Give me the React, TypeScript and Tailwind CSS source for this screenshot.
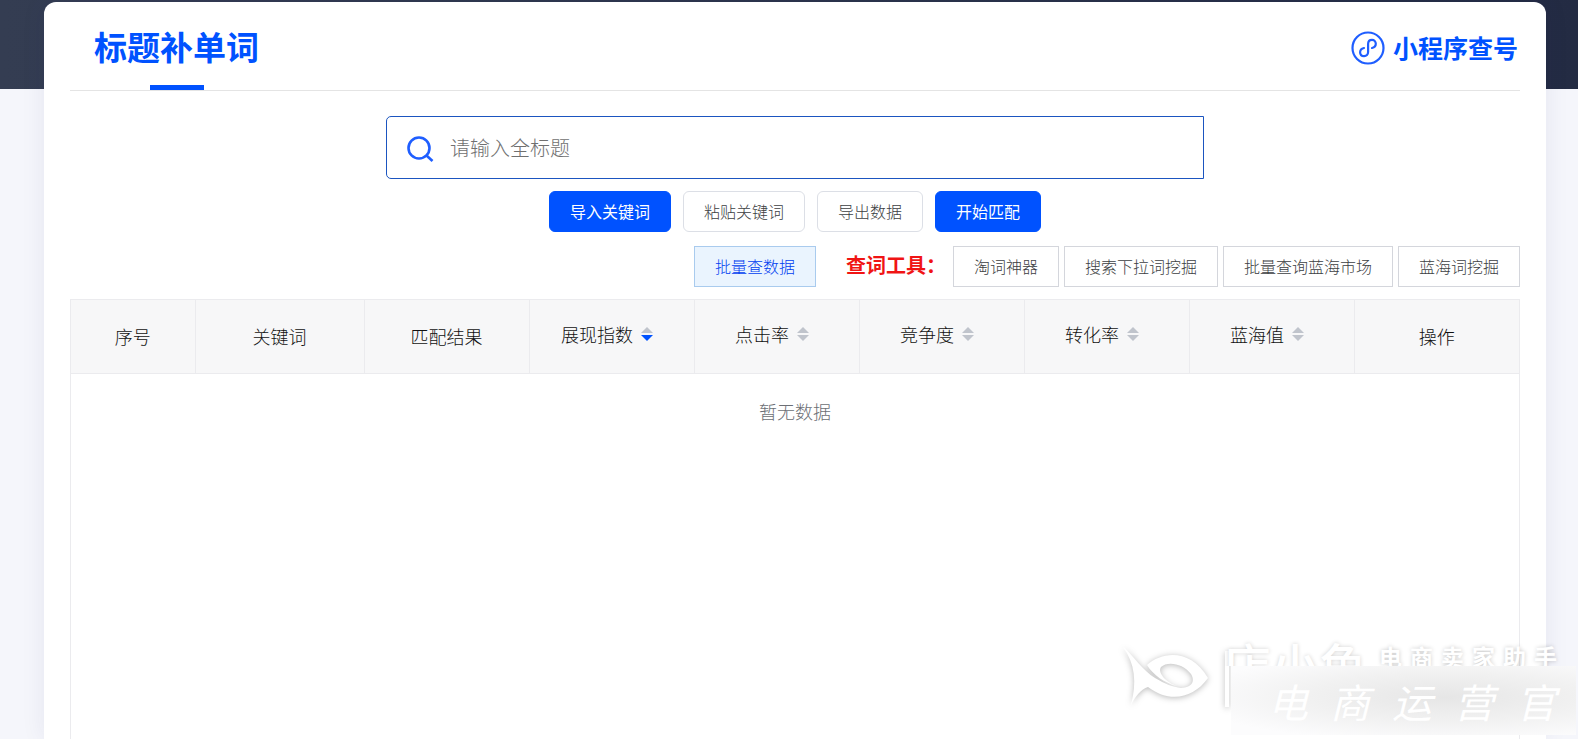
import type { ReactNode } from "react";

const columns = [
  { label: "序号" },
  { label: "关键词" },
  { label: "匹配结果" },
  { label: "展现指数", sort: "desc" },
  { label: "点击率", sort: "none" },
  { label: "竞争度", sort: "none" },
  { label: "转化率", sort: "none" },
  { label: "蓝海值", sort: "none" },
  { label: "操作" },
];

const tools = ["淘词神器", "搜索下拉词挖掘", "批量查询蓝海市场", "蓝海词挖掘"];

function ActionButton({ children, primary }: { children: ReactNode; primary?: boolean }) {
  return (
    <button
      type="button"
      className={`h-[41px] rounded-md border px-5 pb-[2px] text-base leading-5 ${
        primary
          ? "border-[#0052ff] bg-[#0052ff] text-white"
          : "border-[#dcdfe6] bg-white font-light text-[#3c3e42]"
      }`}
    >
      {children}
    </button>
  );
}

function SortIcon({ active }: { active: boolean }) {
  return (
    <svg width="14" height="16" viewBox="0 0 14 16" aria-hidden="true">
      <path d="M7 1 13 7H1Z" fill="#c0c4cc" />
      <path d="M1 9H13L7 15Z" fill={active ? "#0052ff" : "#c0c4cc"} />
    </svg>
  );
}

function MiniProgramIcon() {
  return (
    <svg width="34" height="34" viewBox="0 0 34 34" fill="none" stroke="#1f5eff" aria-hidden="true">
      <circle cx="17" cy="17" r="15.5" strokeWidth="2.200" />
      <path
        d="M21 17c2.200-.5 3.800-2 3.800-4.200 0-2.400-1.700-4-3.800-4-2.400 0-3.900 1.700-3.900 4.100v8.200c0 2.400-1.700 4.100-4 4.100-2.300 0-4-1.600-4-3.900 0-2.200 1.600-3.800 3.900-4.300"
        strokeWidth="2.200"
        strokeLinecap="round"
      />
    </svg>
  );
}

function Watermark() {
  return (
    <div className="pointer-events-none absolute right-0 bottom-0 h-[104px] w-[463px] overflow-hidden">
      <svg
        className="absolute top-2 left-1 drop-shadow-[0_1px_3px_rgba(0,0,0,0.28)]"
        width="112"
        height="68"
        viewBox="0 0 112 68"
        fill="#fff"
        aria-hidden="true"
      >
        <path d="M4 4C14 12 24 28 36 35C46 41 54 44 62 45C74 44 76 38 72 31C64 20 48 18 42 24C38 30 48 40 58 43C46 40 34 32 28 22C44 8 72 6 89 35C74 56 50 60 29 44C22 46 16 54 12 62C18 40 16 20 4 4Z" />
        <path d="M106 8h4v56h-4z" />
      </svg>
      <div className="absolute top-0 left-[104px] h-[31px] overflow-hidden px-1 text-[48px] leading-[56px] font-medium text-white [text-shadow:0_0_4px_rgba(0,0,0,0.18)]">
        店小鱼
      </div>
      <div className="absolute top-[9px] left-[264px] flex gap-2 text-[23px] leading-6 font-bold text-white [text-shadow:0_0_4px_rgba(0,0,0,0.22)]">
        <span>电</span>
        <span>商</span>
        <span>卖</span>
        <span>家</span>
        <span>助</span>
        <span>手</span>
      </div>
      <div className="absolute right-[2px] bottom-1 flex h-[69px] w-[345px] items-center justify-end gap-[22px] bg-[radial-gradient(ellipse_at_62%_45%,#e6e6e6_0%,#f1f1f1_45%,#fcfcfd_85%)] pr-5 text-[40px] leading-[48px] text-white italic">
        <span>电</span>
        <span>商</span>
        <span>运</span>
        <span>营</span>
        <span>官</span>
      </div>
    </div>
  );
}

export default function App() {
  return (
    <div className="relative flex min-h-screen flex-col overflow-hidden bg-[#f5f6fb] font-['Noto_Sans_CJK_SC',sans-serif]">
      <div className="h-[89px] bg-linear-to-r from-[#343d52] to-[#232b43]" />

      <main className="-mt-[87px] mr-8 ml-11 flex grow flex-col rounded-t-xl bg-white px-[26px] shadow-[0_0_24px_rgba(40,40,120,0.08)]">
        {/* Title */}
        <header className="flex h-[89px] items-start justify-between border-b border-[#e4e4e4]">
          <h1 className="flex h-[88px] flex-col items-center justify-between pl-6 text-[33px] leading-[88px] font-bold text-[#0052ff]">
            <span className="h-[83px]">标题补单词</span>
            <span className="h-[5px] w-[54px] bg-[#0052ff]" />
          </h1>
          <a href="#" className="mt-7 flex items-center gap-2 pr-[2px] text-[25px] leading-[34px] font-bold text-[#0052ff]">
            <MiniProgramIcon />
            <span className="pb-[2px]">小程序查号</span>
          </a>
        </header>

        {/* Search */}
        <label className="mx-auto mt-[25px] flex h-[63px] w-full max-w-[818px] items-center gap-[15px] rounded-l-[5px] border border-[#1b55c0] pl-5">
          <svg className="mt-[3px]" width="28" height="28" viewBox="0 0 28 28" fill="none" stroke="#1f5eff" strokeWidth="2.600" aria-hidden="true">
            <circle cx="12" cy="13" r="10.500" />
            <path d="m19.500 20.500 6 5.500" />
          </svg>
          <input
            type="text"
            aria-label="全标题"
            placeholder="请输入全标题"
            className="h-full grow bg-transparent text-xl font-light outline-none placeholder:text-[#707070]"
          />
        </label>

        {/* Actions */}
        <div className="mt-3 flex justify-center gap-3">
          <ActionButton primary>导入关键词</ActionButton>
          <ActionButton>粘贴关键词</ActionButton>
          <ActionButton>导出数据</ActionButton>
          <ActionButton primary>开始匹配</ActionButton>
        </div>

        {/* Tools */}
        <div className="mt-[14px] flex items-center justify-end gap-[5px]">
          <button type="button" className="h-[41px] border border-[#a9cbee] bg-[#eaf4fe] px-5 pb-[2px] text-base leading-5 font-light text-[#0040f0]">
            批量查数据
          </button>
          <strong className="mr-[2px] ml-[25px] pb-1 text-xl leading-6 text-[#f01414]">查词工具：</strong>
          {tools.map((tool) => (
            <button key={tool} type="button" className="h-[41px] border border-[#d4d6dc] bg-white px-5 pb-[2px] text-base leading-5 font-light text-[#3c3e42]">
              {tool}
            </button>
          ))}
        </div>

        {/* Result table */}
        <div className="mt-3 grow border-x border-[#ebebee]">
          <table className="w-full table-fixed border-collapse text-lg font-light">
            <colgroup>
              <col className="w-[124px]" />
              <col className="w-[169px]" />
            </colgroup>
            <thead>
              <tr className="h-[74px] border-y border-[#ebebee] bg-[#f7f7f8] text-[#111]">
                {columns.map(({ label, sort }) => (
                  <th key={label} scope="col" className="border-r border-[#ebebee] pb-[2px] font-light last:border-r-0">
                    {sort ? (
                      <button type="button" className="inline-flex items-center gap-[7px] pr-2 pb-1">
                        {label}
                        <SortIcon active={sort === "desc"} />
                      </button>
                    ) : (
                      label
                    )}
                  </th>
                ))}
              </tr>
            </thead>
            <tbody>
              <tr>
                <td colSpan={columns.length} className="h-[76px] pb-[2px] text-center text-[#6c6f75]">
                  暂无数据
                </td>
              </tr>
            </tbody>
          </table>
        </div>
      </main>

      <Watermark />
    </div>
  );
}
